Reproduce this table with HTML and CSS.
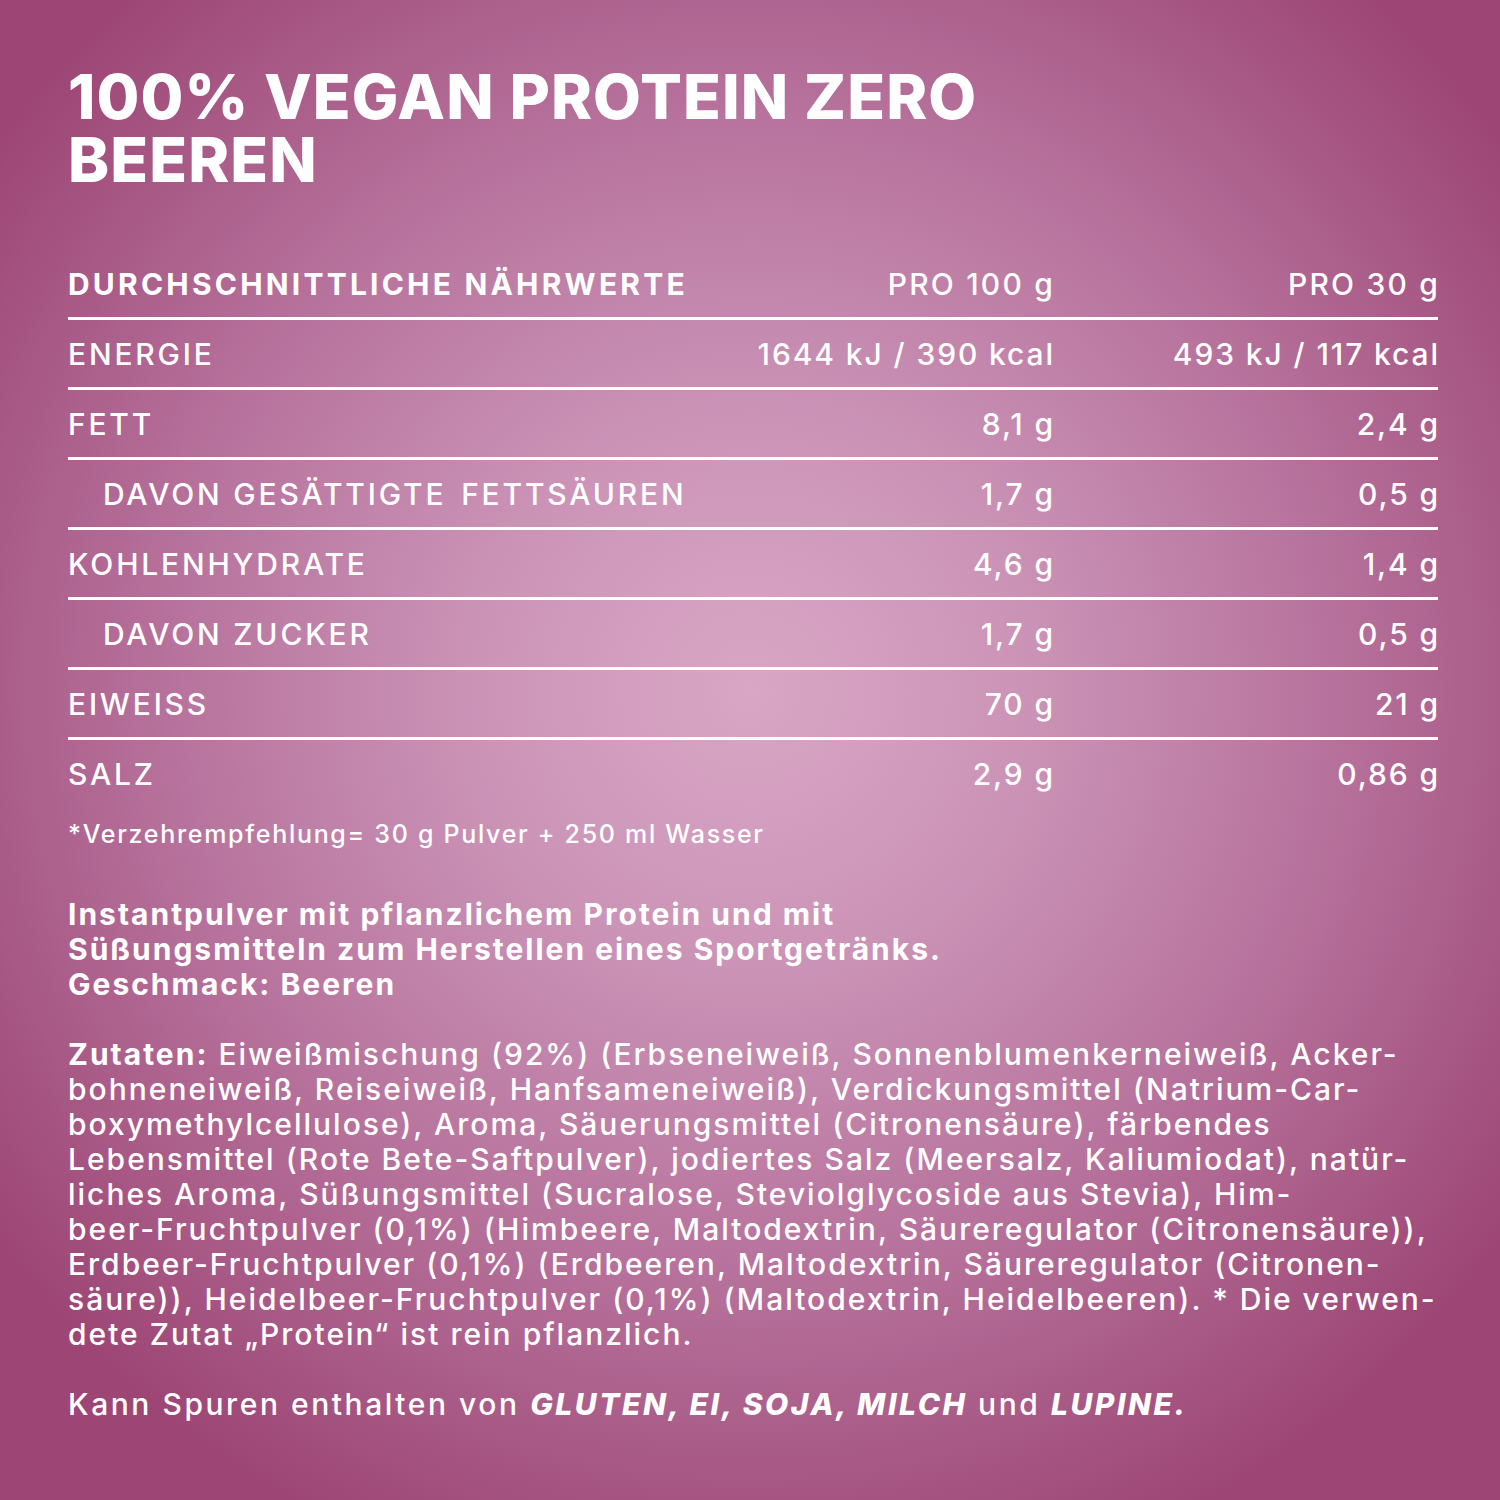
FILE: index.html
```html
<!DOCTYPE html>
<html lang="de">
<head>
<meta charset="utf-8">
<title>100% Vegan Protein Zero Beeren</title>
<link rel="stylesheet" href="styles.css">
</head>
<body>
<main class="sheet">
  <h1 class="title"><span class="tline">100% VEGAN PROTEIN ZERO</span><span class="tline">BEEREN</span></h1>

  <div class="table">
    <div class="row head">
      <div class="c1">DURCHSCHNITTLICHE NÄHRWERTE</div>
      <div class="c2">PRO 100 g</div>
      <div class="c3">PRO 30 g</div>
    </div>
    <div class="row">
      <div class="c1">ENERGIE</div>
      <div class="c2">1644 kJ / 390 kcal</div>
      <div class="c3">493 kJ / 117 kcal</div>
    </div>
    <div class="row">
      <div class="c1">FETT</div>
      <div class="c2">8,1 g</div>
      <div class="c3">2,4 g</div>
    </div>
    <div class="row sub">
      <div class="c1">DAVON GESÄTTIGTE <span class="gap"></span>FETTSÄUREN</div>
      <div class="c2">1,7 g</div>
      <div class="c3">0,5 g</div>
    </div>
    <div class="row">
      <div class="c1">KOHLENHYDRATE</div>
      <div class="c2">4,6 g</div>
      <div class="c3">1,4 g</div>
    </div>
    <div class="row sub">
      <div class="c1">DAVON ZUCKER</div>
      <div class="c2">1,7 g</div>
      <div class="c3">0,5 g</div>
    </div>
    <div class="row">
      <div class="c1">EIWEISS</div>
      <div class="c2">70 g</div>
      <div class="c3">21 g</div>
    </div>
    <div class="row last">
      <div class="c1">SALZ</div>
      <div class="c2">2,9 g</div>
      <div class="c3">0,86 g</div>
    </div>
  </div>

  <p class="note">*Verzehrempfehlung= 30 g Pulver + 250 ml Wasser</p>

  <p class="desc">Instantpulver mit pflanzlichem Protein und mit<br>Süßungsmitteln zum Herstellen eines Sportgetränks.<br>Geschmack: Beeren</p>

  <p class="ingr"><b>Zutaten:</b> Eiweißmischung (92%) (Erbseneiweiß, Sonnenblumenkerneiweiß, Acker-<br>bohneneiweiß, Reiseiweiß, Hanfsameneiweiß), Verdickungsmittel (Natrium-Car-<br>boxymethylcellulose), Aroma, Säuerungsmittel (Citronensäure), färbendes<br>Lebensmittel (Rote Bete-Saftpulver), jodiertes Salz (Meersalz, Kaliumiodat), natür-<br>liches Aroma, Süßungsmittel (Sucralose, Steviolglycoside aus Stevia), Him-<br>beer-Fruchtpulver (0,1%) (Himbeere, Maltodextrin, Säureregulator (Citronensäure)),<br>Erdbeer-Fruchtpulver (0,1%) (Erdbeeren, Maltodextrin, Säureregulator (Citronen-<br>säure)), Heidelbeer-Fruchtpulver (0,1%) (Maltodextrin, Heidelbeeren). * Die verwen-<br>dete Zutat „Protein“ ist rein pflanzlich.</p>

  <p class="allerg">Kann Spuren enthalten von <b><i>GLUTEN, EI, SOJA, MILCH</i></b> und <b><i>LUPINE.</i></b></p>
</main>
</body>
</html>
```

FILE: styles.css
```css
html, body {
  margin: 0;
  padding: 0;
}
body {
  width: 1500px;
  height: 1500px;
  overflow: hidden;
  color: #ffffff;
  font-family: "Inter", "Noto Sans", sans-serif;
  background: radial-gradient(ellipse 62% 62% at 50% 46%, #d9a6c5 0%, #cc95b8 28%, #b7739d 62%, #9d4675 100%);
  background-color: #9b4272;
}
.sheet {
  padding: 65px 62px 0 68px;
}
.title {
  margin: 0;
  font-size: 62px;
  line-height: 63px;
  font-weight: 800;
  letter-spacing: 1.1px;
}
.tline {
  display: block;
}
.table {
  margin-top: 59px;
  width: 1370px;
}
.row {
  display: grid;
  grid-template-columns: 1fr 300px 385px;
  align-items: center;
  height: 67px;
  border-bottom: 3px solid #ffffff;
  font-size: 30px;
  font-weight: 500;
  letter-spacing: 1.9px;
}
.row .c1 {
  letter-spacing: 2.8px;
}
.row.last {
  border-bottom: 0;
}
.row.head .c1 {
  font-weight: 700;
  letter-spacing: 3.2px;
}
.row.head .c2,
.row.head .c3 {
  letter-spacing: 2.2px;
}
.row.sub .c1 {
  padding-left: 35px;
}
.gap {
  display: inline-block;
  width: 4px;
}
.c2, .c3 {
  text-align: right;
  margin-right: -2px;
}
.note {
  margin: 10px 0 0;
  font-size: 25px;
  line-height: 35px;
  font-weight: 500;
  letter-spacing: 1.7px;
}
.desc {
  margin: 45px 0 0;
  font-size: 30px;
  line-height: 35px;
  font-weight: 700;
  letter-spacing: 2px;
  white-space: nowrap;
}
.ingr {
  margin: 35px 0 0;
  font-size: 30px;
  line-height: 35px;
  font-weight: 500;
  letter-spacing: 2px;
  white-space: nowrap;
}
.ingr b {
  font-weight: 700;
}
.allerg {
  margin: 35px 0 0;
  font-size: 30px;
  line-height: 35px;
  font-weight: 500;
  letter-spacing: 2.55px;
  white-space: nowrap;
}
.allerg b {
  font-weight: 800;
}
```
